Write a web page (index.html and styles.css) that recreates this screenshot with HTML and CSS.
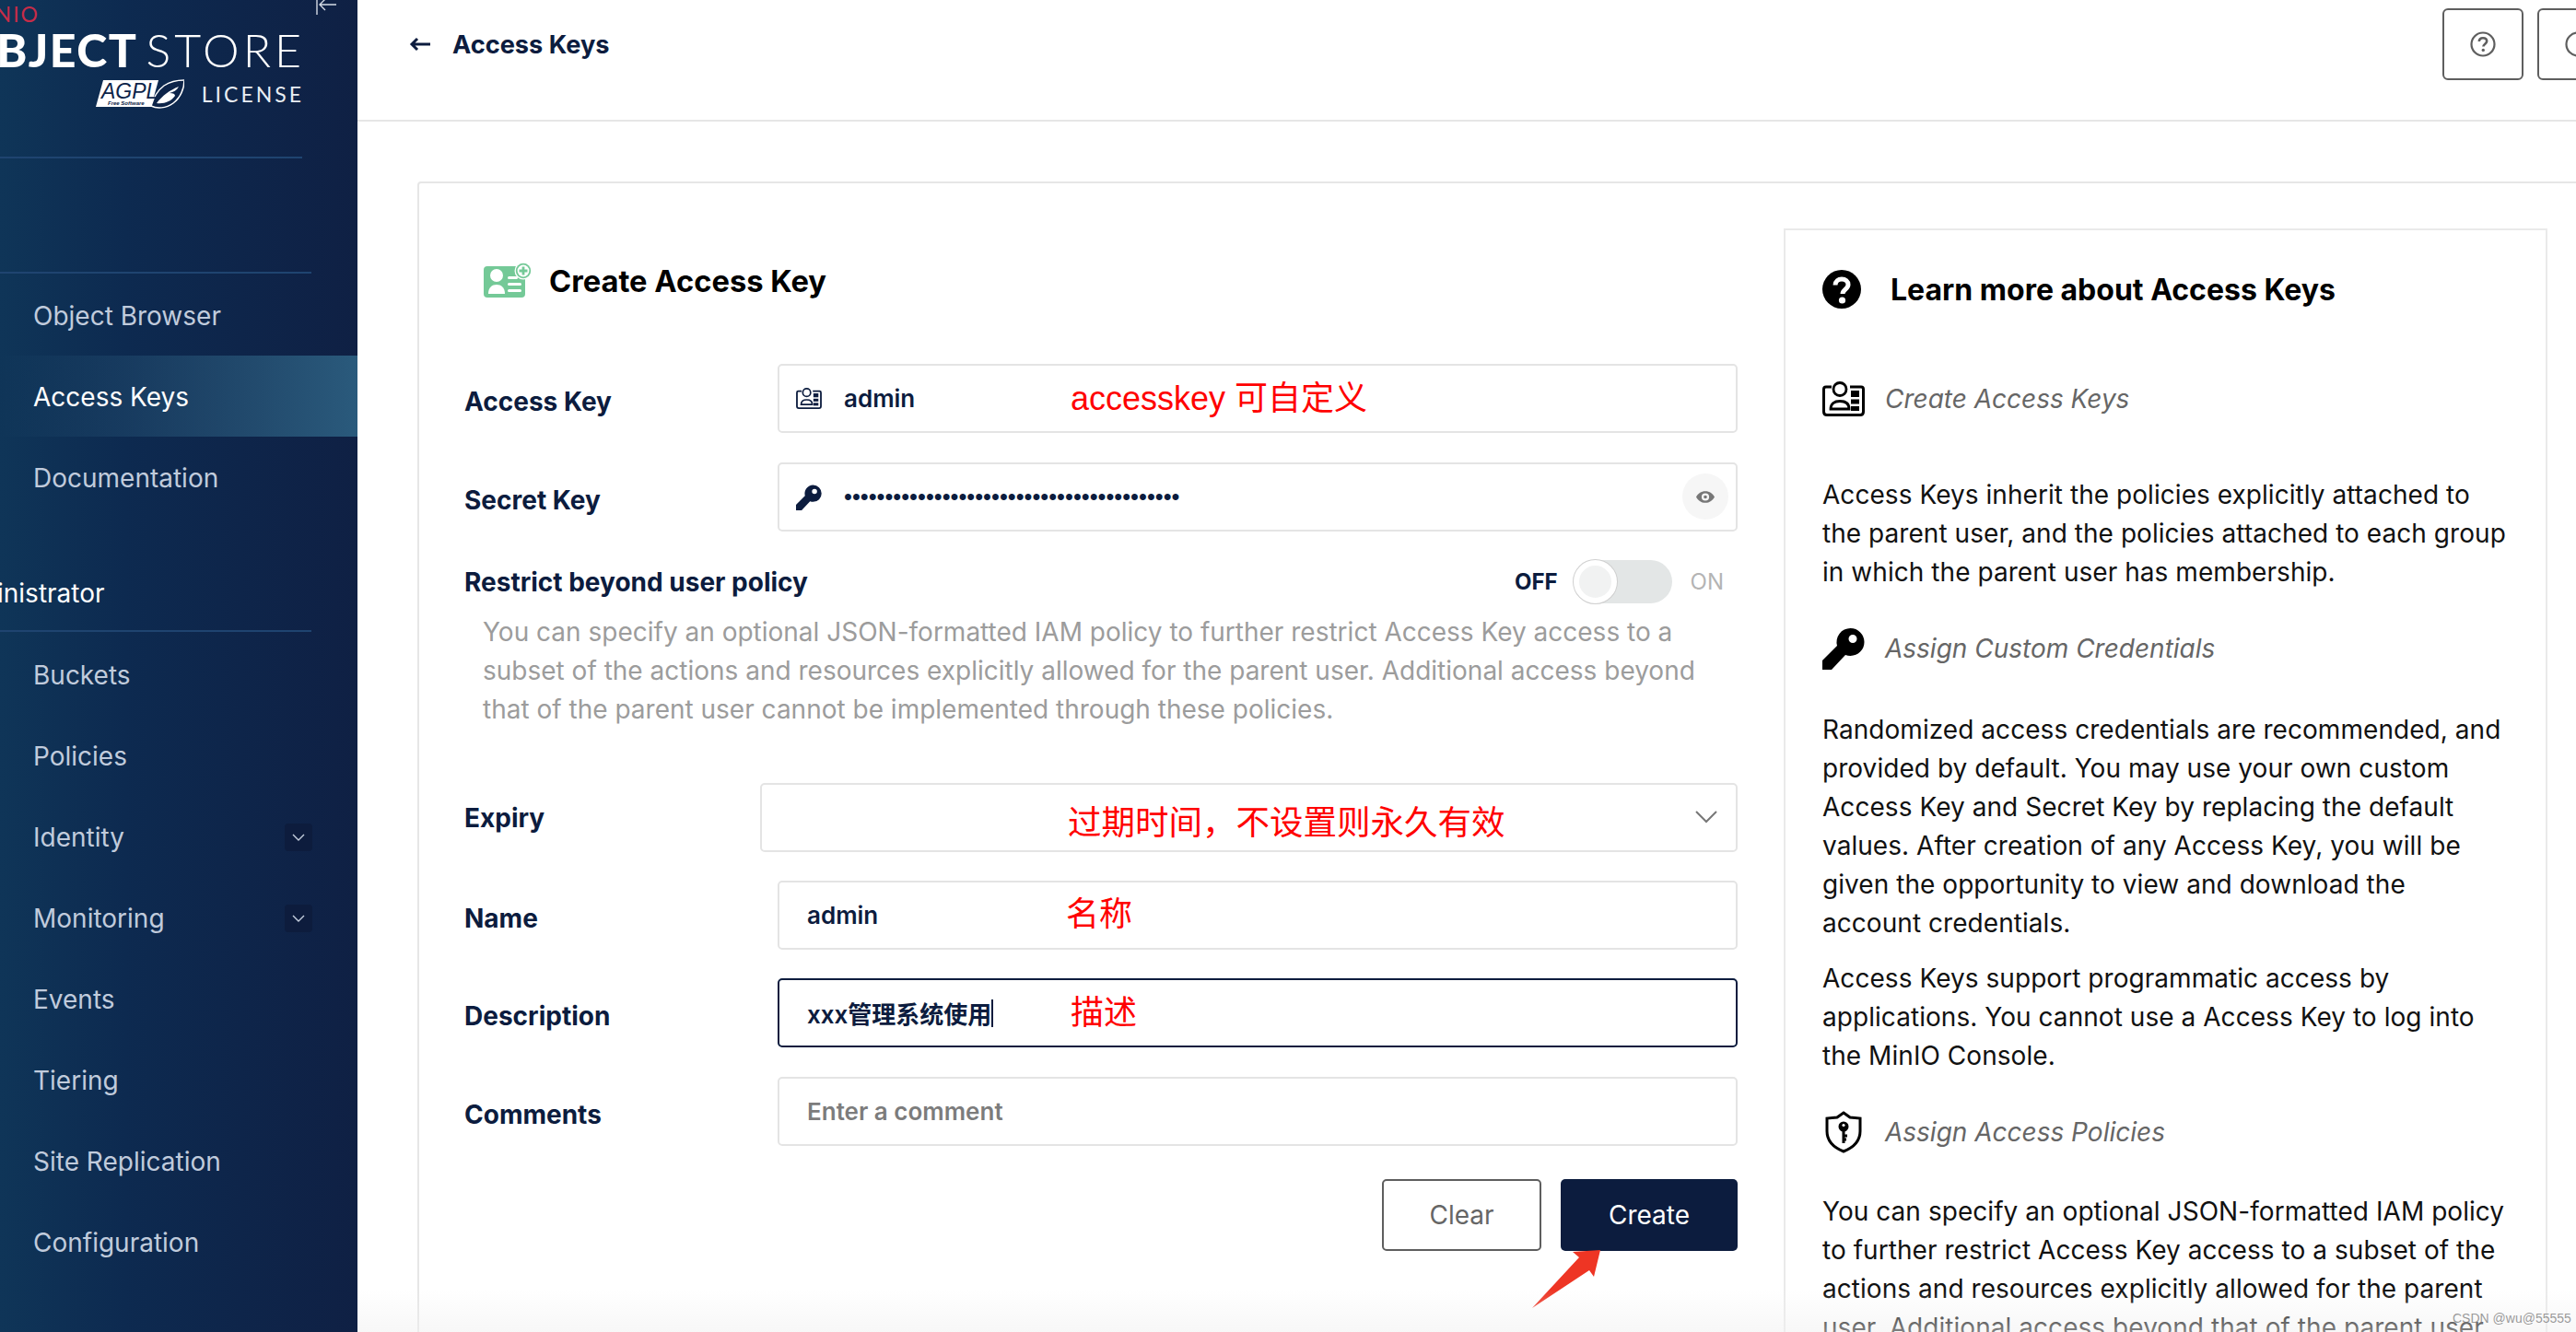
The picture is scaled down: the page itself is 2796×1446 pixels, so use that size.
FILE: index.html
```html
<!DOCTYPE html>
<html lang="en">
<head>
<meta charset="utf-8">
<title>Access Keys</title>
<link rel="stylesheet" href="styles.css">
</head>
<body>
<div class="page">
  <aside class="sidebar">
    <div class="brand">
      <div class="brand-top"><span class="minio">MINIO</span></div>
      <svg class="collapse" viewBox="0 0 22 16" width="22" height="16"><path d="M1 0V16M22 5H4M10 -1L4 5L10 11" fill="none" stroke="#d5dbe6" stroke-width="1.4"/></svg>
      <div class="brand-name"><span class="bold">OBJECT</span><span class="light">STORE</span></div>
      <div class="brand-license">
        <svg class="agpl" viewBox="0 0 96 32" width="96" height="32">
          <path d="M8 1H68L60 30H0Z" fill="#fff"/>
          <path d="M60 29C62 22 66 13 74 7C80 3 88 1 96 1C96 10 92 20 84 26C76 32 66 32 60 29Z" fill="#0d2449" stroke="#fff" stroke-width="1.500"/>
          <path d="M66 26C72 18 80 12 90 8C88 12 84 14 80 15C84 15 86 16 86 18C82 24 74 27 66 26Z" fill="#fff"/>
          <text x="6" y="21" class="agpl-main">AGPL</text>
          <text x="13" y="28" class="agpl-sub">Free Software</text>
        </svg>
        <span class="license">LICENSE</span>
      </div>
      <div class="rule rule-short"></div>
    </div>
    <nav class="nav">
      <a class="nav-item">Object Browser</a>
      <a class="nav-item active">Access Keys</a>
      <a class="nav-item">Documentation</a>
      <div class="nav-section"><span>Administrator</span></div>
      <a class="nav-item">Buckets</a>
      <a class="nav-item">Policies</a>
      <a class="nav-item">Identity<span class="chev"><svg viewBox="0 0 14 8" width="14" height="8"><path d="M1 1L7 7L13 1" fill="none" stroke="#c6d0df" stroke-width="1.4"/></svg></span></a>
      <a class="nav-item">Monitoring<span class="chev"><svg viewBox="0 0 14 8" width="14" height="8"><path d="M1 1L7 7L13 1" fill="none" stroke="#c6d0df" stroke-width="1.4"/></svg></span></a>
      <a class="nav-item">Events</a>
      <a class="nav-item">Tiering</a>
      <a class="nav-item">Site Replication</a>
      <a class="nav-item">Configuration</a>
    </nav>
  </aside>

  <main class="main">
    <header class="topbar">
      <div class="crumb">
        <svg viewBox="0 0 24 16" width="24" height="16"><path d="M23 8H3M9 2L3 8L9 14" fill="none" stroke="#0c1c3e" stroke-width="3"/></svg>
        <span>Access Keys</span>
      </div>
      <div class="top-actions">
        <button class="icon-btn"><svg viewBox="0 0 28 28" width="28" height="28"><circle cx="14" cy="14" r="12.5" fill="none" stroke="#5e5e5e" stroke-width="2.2"/><path d="M9.8 11C10 8.4 11.8 7.2 14 7.2C16.4 7.2 18.2 8.6 18.2 10.8C18.2 13.6 14.4 13.8 14.4 16.6" fill="none" stroke="#5e5e5e" stroke-width="2.6"/><circle cx="14.3" cy="20.4" r="1.7" fill="#5e5e5e"/></svg></button>
        <button class="icon-btn"><svg viewBox="0 0 28 28" width="28" height="28"><circle cx="14" cy="14" r="12.5" fill="none" stroke="#5e5e5e" stroke-width="2.2"/><path d="M14 7V14" fill="none" stroke="#5e5e5e" stroke-width="2.6"/></svg></button>
      </div>
    </header>

    <div class="content">
      <section class="card">
        <div class="form">
          <div class="form-title">
            <svg viewBox="0 0 54 42" width="54" height="42">
              <rect x="1" y="5" width="45" height="34" rx="4" fill="#74c997"/>
              <circle cx="15" cy="15" r="7" fill="#fff"/>
              <path d="M6 35C6 28 10 25 15 25C20 25 24 28 24 35Z" fill="#fff"/>
              <rect x="27" y="16" width="11" height="3" rx="1.5" fill="#fff"/>
              <rect x="27" y="23" width="15" height="3" rx="1.5" fill="#fff"/>
              <rect x="27" y="30" width="15" height="3" rx="1.5" fill="#fff"/>
              <circle cx="44" cy="10" r="9.500" fill="#fff"/>
              <circle cx="44" cy="10" r="8.200" fill="#74c997"/>
              <circle cx="44" cy="10" r="6.400" fill="#fff"/>
              <path d="M44 5.500V14.500M39.500 10H48.500" stroke="#74c997" stroke-width="2.800"/>
            </svg>
            <h1>Create Access Key</h1>
          </div>

          <div class="row row-first">
            <label class="row-label">Access Key</label>
            <div class="field">
              <svg class="field-icon" viewBox="0 0 46 38" width="28" height="23"><use href="#idcard"/></svg>
              <span class="field-value">admin</span>
              <span class="note note-access">accesskey 可自定义</span>
            </div>
          </div>

          <div class="row">
            <label class="row-label">Secret Key</label>
            <div class="field">
              <svg class="field-icon" viewBox="0 0 46 46" width="28" height="28"><use href="#key"/></svg>
              <span class="field-value dots">•••••••••••••••••••••••••••••••••••••••••</span>
              <span class="eye"><svg viewBox="0 0 22 14" width="20" height="13"><path fill-rule="evenodd" d="M11 0C16 0 20 3 22 7C20 11 16 14 11 14C6 14 2 11 0 7C2 3 6 0 11 0ZM11 2.5A4.5 4.5 0 1 0 11 11.5A4.5 4.5 0 1 0 11 2.5ZM11 5A2 2 0 1 1 11 9A2 2 0 1 1 11 5Z" fill="#777"/></svg></span>
            </div>
          </div>

          <div class="row restrict">
            <span class="row-label-plain">Restrict beyond user policy</span>
            <div class="toggle-wrap">
              <span class="off">OFF</span>
              <span class="toggle"><span class="knob"></span></span>
              <span class="on">ON</span>
            </div>
          </div>
          <p class="hint">You can specify an optional JSON-formatted IAM policy to further restrict Access Key access to a subset of the actions and resources explicitly allowed for the parent user. Additional access beyond that of the parent user cannot be implemented through these policies.</p>

          <div class="row row-expiry">
            <label class="row-label label-expiry">Expiry</label>
            <div class="field">
              <span class="note note-expiry">过期时间，不设置则永久有效</span>
              <svg class="select-chev" viewBox="0 0 24 14" width="24" height="14"><path d="M1 1L12 12L23 1" fill="none" stroke="#777" stroke-width="2"/></svg>
            </div>
          </div>

          <div class="row row-tight">
            <label class="row-label">Name</label>
            <div class="field field-plain">
              <span class="field-value">admin</span>
              <span class="note note-name">名称</span>
            </div>
          </div>

          <div class="row row-tight">
            <label class="row-label">Description</label>
            <div class="field field-plain field-focus">
              <span class="field-value">xxx管理系统使用</span><span class="caret"></span>
              <span class="note note-desc">描述</span>
            </div>
          </div>

          <div class="row">
            <label class="row-label">Comments</label>
            <div class="field field-plain"><span class="placeholder">Enter a comment</span></div>
          </div>

          <div class="actions">
            <button class="btn btn-clear">Clear</button>
            <button class="btn btn-create">Create</button>
          </div>
        </div>

        <aside class="help">
          <div class="help-title">
            <svg viewBox="0 0 42 42" width="42" height="42"><circle cx="21" cy="21" r="21" fill="#000"/><path d="M14 16.5C14.2 12 17.4 10 21 10C25 10 28 12.4 28 16C28 21 22 21.200 22 26" fill="none" stroke="#fff" stroke-width="5"/><circle cx="21.500" cy="33" r="3.600" fill="#fff"/></svg>
            <h2>Learn more about Access Keys</h2>
          </div>
          <div class="help-head head-first">
            <svg viewBox="0 0 46 38" width="46" height="38">
              <symbol id="idcard" viewBox="0 0 46 38">
                <path d="M10 6H4Q1.500 6 1.500 8.500V33Q1.500 36.500 5 36.500H41Q44.500 36.500 44.500 33V8.500Q44.500 6 42 6H30" fill="none" stroke="currentColor" stroke-width="3"/>
                <circle cx="19" cy="8.500" r="7" fill="none" stroke="currentColor" stroke-width="2.800"/>
                <path d="M9 30C9 24 13 21.500 19 21.500C25 21.500 29 24 29 30Z" fill="none" stroke="currentColor" stroke-width="2.800"/>
                <rect x="31" y="10" width="9" height="7" fill="currentColor"/>
                <rect x="31" y="19.500" width="9" height="5" fill="currentColor"/>
                <rect x="31" y="27" width="9" height="5" fill="currentColor"/>
              </symbol>
              <use href="#idcard"/>
            </svg>
            <span>Create Access Keys</span>
          </div>
          <p class="help-text">Access Keys inherit the policies explicitly attached to the parent user, and the policies attached to each group in which the parent user has membership.</p>
          <div class="help-head head-key">
            <svg viewBox="0 0 46 46" width="46" height="46">
              <symbol id="key" viewBox="0 0 46 46">
                <path fill-rule="evenodd" fill="currentColor" d="M30.500 1A15 15 0 1 1 30.500 31A15 15 0 0 1 25 30L10 46H0V36L16 20A15 15 0 0 1 30.500 1ZM33 8A4.500 4.500 0 1 0 33 17A4.500 4.500 0 1 0 33 8Z"/>
              </symbol>
              <use href="#key"/>
            </svg>
            <span>Assign Custom Credentials</span>
          </div>
          <p class="help-text text-tight">Randomized access credentials are recommended, and provided by default. You may use your own custom Access Key and Secret Key by replacing the default values. After creation of any Access Key, you will be given the opportunity to view and download the account credentials.</p>
          <p class="help-text text-next">Access Keys support programmatic access by applications. You cannot use a Access Key to log into the MinIO Console.</p>
          <div class="help-head head-shield">
            <svg viewBox="0 0 46 46" width="46" height="46">
              <path d="M23 2L30 7L41 8V22C41 33 33 40 23 44C13 40 5 33 5 22V8L16 7Z" fill="none" stroke="#000" stroke-width="3"/>
              <circle cx="23" cy="17" r="5.500" fill="#000"/>
              <circle cx="23" cy="15.500" r="1.600" fill="#fff"/>
              <path d="M23 20V35M23 27H27M23 31H26" fill="none" stroke="#000" stroke-width="3"/>
            </svg>
            <span>Assign Access Policies</span>
          </div>
          <p class="help-text text-last">You can specify an optional JSON-formatted IAM policy to further restrict Access Key access to a subset of the actions and resources explicitly allowed for the parent user. Additional access beyond that of the parent user cannot be implemented through these policies.</p>
        </aside>
      </section>
    </div>
  </main>

  <svg class="arrow" viewBox="0 0 76 66" width="76" height="66"><path d="M0 63L51 8L44 2L74 0L67 29L62 22Z" fill="#ee3524"/></svg>
  <div class="fade"></div>
  <div class="watermark">CSDN @wu@55555</div>
</div>
</body>
</html>
```

FILE: styles.css
```css
* { box-sizing: border-box; }
html, body { margin: 0; padding: 0; }
body { font-family: Inter, "Noto Sans CJK SC", sans-serif; background: #fff; color: #000; }
h1, h2, p { margin: 0; }
button { font-family: inherit; background: none; padding: 0; cursor: pointer; }

.page { position: relative; display: flex; width: 2796px; height: 1446px; overflow: hidden; }

/* Sidebar */
.sidebar { width: 388px; flex: none; background: linear-gradient(90deg, #0f3558 0%, #0d2a50 35%, #0f2044 100%); color: #c0cbdc; }
.brand { position: relative; height: 298px; padding-top: 2px; }
.brand-top { width: 41px; height: 26px; display: flex; justify-content: flex-end; overflow: hidden; }
.minio { font-family: Lato, sans-serif; font-size: 23px; line-height: 26px; letter-spacing: 2px; margin-right: -2px; color: #c72c48; white-space: nowrap; }
.collapse { position: absolute; left: 343px; top: 0; }
.brand-name { width: 331px; height: 52px; margin-top: 0; display: flex; justify-content: flex-end; gap: 9px; overflow: hidden; font-family: Lato, sans-serif; font-size: 50px; line-height: 52px; color: #fff; white-space: nowrap; }
.bold { font-weight: 900; letter-spacing: 1.500px; }
.light { font-weight: 300; letter-spacing: 4px; }
.brand-license { width: 330px; height: 32px; margin-top: 6px; display: flex; justify-content: flex-end; align-items: center; gap: 19px; }
.agpl-main { font-family: "Liberation Sans", sans-serif; font-style: italic; font-size: 23px; fill: #0d2449; }
.agpl-sub { font-family: "Liberation Sans", sans-serif; font-style: italic; font-weight: 700; font-size: 6px; fill: #0d2449; }
.license { font-family: Lato, sans-serif; font-size: 23px; letter-spacing: 3px; color: #e8edf3; }
.rule-short { position: absolute; left: 0; top: 170px; width: 328px; height: 2px; background: #1f4470; }
.brand::after { content: ""; position: absolute; left: 0; top: 295px; width: 338px; height: 2px; background: #1f4470; }

.nav { display: flex; flex-direction: column; }
.nav-item { height: 88px; padding: 2px 49px 0 36px; display: flex; align-items: center; justify-content: space-between; font-size: 28px; }
.nav-item.active { color: #fff; background: linear-gradient(90deg, rgba(42, 90, 124, 0) 0%, #2a5a7c 100%); }
.nav-section { height: 124px; margin-bottom: 2px; padding-top: 64px; border-bottom: 2px solid #1f4470; width: 338px; font-size: 28px; line-height: 36px; color: #fff; overflow: hidden; display: flex; }
.nav-section span { margin-left: -64px; }
.chev { width: 30px; height: 30px; border-radius: 4px; background: #0d1c3d; display: flex; align-items: center; justify-content: center; }

/* Main */
.main { flex: none; width: 2408px; display: flex; flex-direction: column; }
.topbar { height: 132px; flex: none; border-bottom: 2px solid #e6e6e6; display: flex; justify-content: space-between; padding: 9px 0 0 56px; }
.crumb { height: 78px; display: flex; align-items: center; gap: 23px; font-size: 27.200px; font-weight: 700; color: #0c1c3e; }
.top-actions { display: flex; gap: 15px; margin-right: -46px; }
.icon-btn { width: 88px; height: 78px; border: 2px solid #5e5e5e; border-radius: 6px; display: flex; align-items: center; justify-content: center; }

.content { padding: 65px 0 0 65px; }
.card { width: 2400px; height: 1400px; border: 2px solid #e6e6e6; border-radius: 4px; padding: 49px 0 0 49px; display: flex; gap: 50px; }

/* Form */
.form { width: 1382px; flex: none; display: flex; flex-direction: column; }
.form-title { height: 42px; margin: 36px 0 0 20px; display: flex; align-items: center; gap: 18px; }
.form-title h1 { font-size: 32.700px; font-weight: 700; color: #000; }
.row { display: flex; flex: none; margin-top: 32px; }
.row-first { margin-top: 69px; }
.row-tight { margin-top: 31px; }
.row-label { width: 340px; flex: none; padding-top: 24px; font-size: 28px; line-height: 34px; font-weight: 700; color: #0c1c3e; }
.label-expiry { width: 321px; padding-top: 21px; }
.field { position: relative; flex: 1; height: 75px; border: 2px solid #e4e4e4; border-radius: 5px; padding: 0 18px; display: flex; align-items: center; color: #0c1c3e; }
.field-icon { flex: none; margin-right: 24px; }
.field-value { font-size: 26px; font-weight: 600; color: #0c1c3e; white-space: nowrap; }
.dots { font-family: "Liberation Sans", sans-serif; font-size: 25.400px; font-weight: 400; }
.field-plain { padding-left: 30px; }
.field-focus { border-color: #0c1c3e; }
.caret { width: 2px; height: 30px; background: #0c1c3e; }
.placeholder { font-size: 26px; font-weight: 600; color: #7c7c7c; }
.eye { position: absolute; right: 8px; top: 10px; width: 50px; height: 50px; border-radius: 50%; background: #f6f6f6; display: flex; align-items: center; justify-content: center; }
.select-chev { position: absolute; right: 20px; top: 28px; }

.note { position: absolute; font-family: "Liberation Sans", "Noto Sans CJK SC", sans-serif; font-size: 36px; line-height: 44px; color: #f00; white-space: nowrap; }
.note-access { left: 316px; top: 14px; }
.note-expiry { left: 332px; top: 20px; font-size: 36.500px; }
.note-name { left: 311px; top: 13px; }
.note-desc { left: 316px; top: 14px; }

.restrict { height: 47px; margin-top: 31px; align-items: center; justify-content: space-between; }
.row-label-plain { font-size: 28px; font-weight: 700; color: #0c1c3e; }
.toggle-wrap { display: flex; align-items: center; margin-right: 15px; font-size: 24px; }
.off { font-weight: 700; color: #0c1c3e; margin-right: 17px; }
.on { color: #b4b4b4; margin-left: 20px; }
.toggle { width: 107px; height: 47px; border-radius: 24px; background: #e3e6e6; display: block; position: relative; }
.knob { position: absolute; left: 0; top: 0; width: 47px; height: 47px; border-radius: 50%; background: #f1f2f2; border: 6px solid #fff; box-shadow: 0 0 0 1px #cfcfcf; }

.hint { margin: 10px 0 0 20px; font-size: 28px; line-height: 42px; color: #9c9c9c; width: 1330px; }
.row-expiry { margin-top: 59px; }

.actions { display: flex; justify-content: flex-end; gap: 21px; margin-top: 36px; }
.btn { height: 78px; font-size: 28px; border-radius: 5px; }
.btn-clear { width: 173px; border: 2px solid #5e5e5e; color: #666; }
.btn-create { width: 192px; border: 0; background: #0c1c3e; color: #fff; }

/* Help panel */
.help { width: 829px; flex: none; border: 2px solid #eaeaea; padding: 0 40px; align-self: flex-start; height: 1400px; }
.help-title { display: flex; align-items: center; gap: 32px; margin-top: 43px; height: 42px; }
.help-title h2 { font-size: 32px; font-weight: 700; color: #000; white-space: nowrap; }
.help-head { display: flex; align-items: center; gap: 22px; font-size: 28px; font-style: italic; color: #666; }
.help-head svg { color: #000; flex: none; }
.head-first { margin-top: 79px; height: 38px; }
.head-key { margin-top: 39px; height: 46px; }
.head-shield { margin-top: 39px; height: 46px; }
.help-text { font-size: 28px; line-height: 42px; letter-spacing: 0.05px; color: #111; }
.head-first + .help-text { margin-top: 64px; }
.text-tight { margin-top: 44px; }
.text-next { margin-top: 18px; }
.text-last { margin-top: 42px; }

/* Overlays */
.arrow { position: absolute; left: 1663px; top: 1357px; }
.fade { position: absolute; left: 388px; right: 0; bottom: 0; height: 46px; background: linear-gradient(180deg, rgba(245, 245, 245, 0), rgba(240, 240, 240, 0.5)); pointer-events: none; }
.watermark { position: absolute; left: 2662px; top: 1421px; font-family: "Liberation Sans", sans-serif; font-size: 14px; line-height: 20px; color: rgba(120, 120, 120, 0.75); white-space: nowrap; }
```
